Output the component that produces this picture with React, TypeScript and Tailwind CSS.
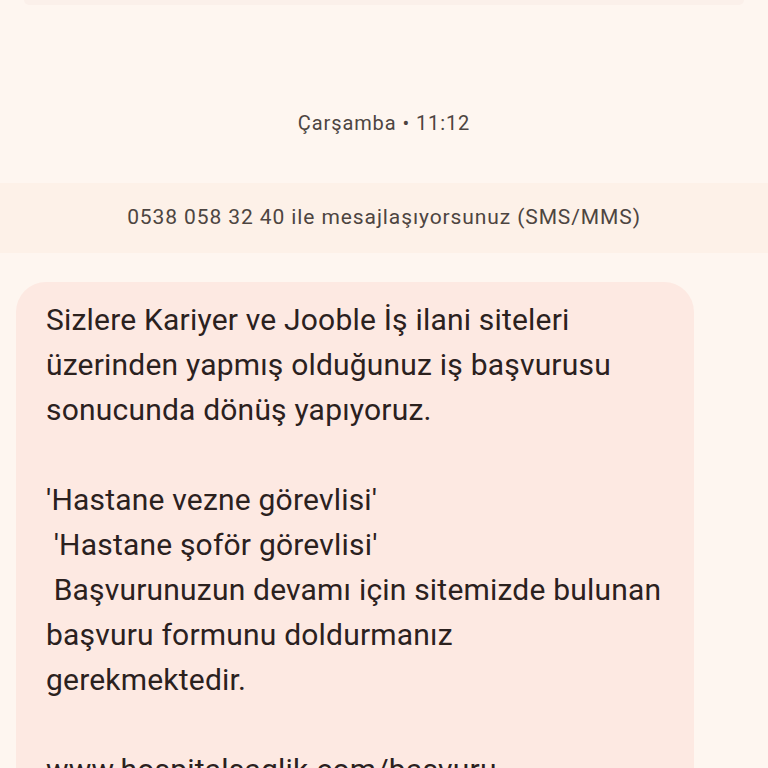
const lines = [
  "Sizlere Kariyer ve Jooble İş ilani siteleri",
  "üzerinden yapmış olduğunuz iş başvurusu",
  "sonucunda dönüş yapıyoruz.",
  "",
  "'Hastane vezne görevlisi'",
  " 'Hastane şoför görevlisi'",
  " Başvurunuzun devamı için sitemizde bulunan",
  "başvuru formunu doldurmanız",
  "gerekmektedir.",
  "",
  "www.hospitalsaglik.com/basvuru",
];

export default function App() {
  return (
    <div
      className="h-[768px] w-[768px] overflow-hidden bg-[#fef6f0] text-[#2b211e]"
      style={{ fontFamily: "Roboto, 'Noto Sans', sans-serif" }}
    >
      {/* previous item edge */}
      <div className="mx-[24px] h-[5px] rounded-b-[6px] bg-[#fbf0ea]" />

      <div className="flex h-[178px] items-center justify-center pt-[58px]">
        <p className="text-[20px] tracking-[0.9px] text-[#4d4541]">
          Çarşamba • 11:12
        </p>
      </div>

      <div className="flex h-[70px] items-center justify-center bg-[#fdf1e8]">
        <p className="text-[21px] tracking-[0.9px] text-[#4d4541]">
          0538 058 32 40 ile mesajlaşıyorsunuz (SMS/MMS)
        </p>
      </div>

      <div className="mt-[29px] ml-[16px] w-[678px] rounded-[30px] bg-[#fde9e2] px-[30px] pt-[15px] pb-[20px]">
        {lines.map((line, i) => (
          <p
            key={i}
            className="h-[45px] whitespace-pre text-[30px] leading-[45px] tracking-[0.2px]"
          >
            {line}
          </p>
        ))}
      </div>
    </div>
  );
}
